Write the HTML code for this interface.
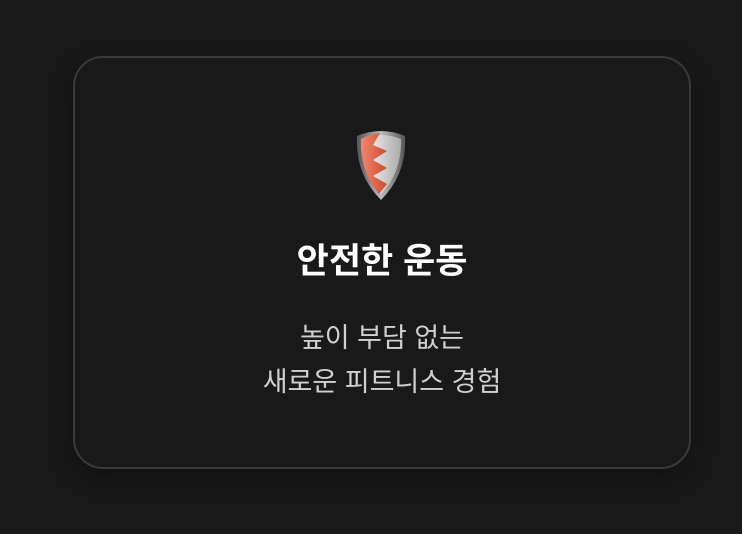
<!DOCTYPE html>
<html><head><meta charset="utf-8"><style>
html,body{margin:0;padding:0;background:#1a1919;width:742px;height:534px;overflow:hidden;font-family:"Liberation Sans","Noto Sans CJK KR",sans-serif}
.card{position:absolute;left:73px;top:56px;width:614px;height:409px;border:2px solid #3b3a39;border-radius:30px;background:#1a1919;box-shadow:0 8px 24px rgba(0,0,0,.3)}
.t{position:absolute;left:73px;width:618px;top:238px;text-align:center;color:#fff;font-size:35px;font-weight:bold;line-height:48px}
.s{position:absolute;left:73px;width:618px;top:316px;text-align:center;color:#d0d0d0;font-size:27px;line-height:44px}
svg{position:absolute;left:355px;top:128px}
</style></head><body>
<div class="card"></div>
<svg width="52" height="74" viewBox="0 0 52 74">
<defs><linearGradient id="m" x1="0" x2="1"><stop offset="0" stop-color="#555"/><stop offset=".5" stop-color="#bbb"/><stop offset="1" stop-color="#555"/></linearGradient>
<linearGradient id="w" x1="0" x2="1"><stop offset="0" stop-color="#fff"/><stop offset="1" stop-color="#aaa"/></linearGradient>
<linearGradient id="r" x1="0" x2="1"><stop offset="0" stop-color="#f08870"/><stop offset="1" stop-color="#d04a30"/></linearGradient></defs>
<path d="M2 8 Q26 -2 50 8 Q52 46 26 72 Q0 46 2 8Z" fill="url(#m)"/>
<path d="M6 11 Q26 3 46 11 Q47 44 26 66 Q5 44 6 11Z" fill="url(#w)"/>
<path d="M6 11 Q16 6 25 5 L18 17 L32 23 L18 32 L32 40 L18 48 L32 56 L24 66 Q5 44 6 11Z" fill="url(#r)"/>
</svg>
<div class="t">안전한 운동</div>
<div class="s">높이 부담 없는<br>새로운 피트니스 경험</div>
</body></html>
